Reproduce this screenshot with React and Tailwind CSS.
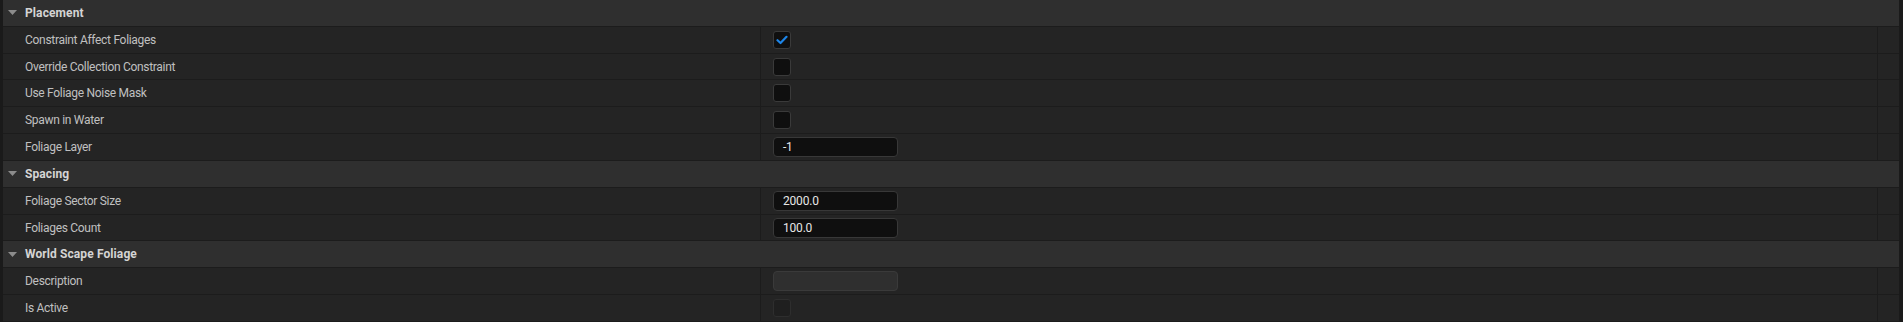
import React from "react";

const Header = ({ title }) => (
  <div className="flex h-[26px] items-center bg-[#2f2f2f] border-b border-[#1c1c1c] box-content">
    <svg width="9" height="5" viewBox="0 0 9 5" className="ml-[5px] mr-[8px]">
      <polygon points="0,0 9,0 4.5,5" fill="#8c8c8c" />
    </svg>
    <span className="font-bold text-[#d4d4d4] tracking-[0.1px]">{title}</span>
  </div>
);

const Check = ({ checked, disabled }) => (
  <div
    className={`w-[18px] h-[18px] rounded-[3px] border flex items-center justify-center ${
      disabled ? "bg-[#1f1f1f] border-[#2e2e2e]" : "bg-[#0f0f0f] border-[#3a3a3a]"
    }`}
  >
    {checked && (
      <svg width="12" height="10" viewBox="0 0 12 10">
        <path d="M1.5 5.2 L4.5 8 L10.5 1.8" stroke="#1d85e8" strokeWidth="2.2" fill="none" strokeLinecap="round" strokeLinejoin="round" />
      </svg>
    )}
  </div>
);

const Input = ({ value, disabled }) => (
  <div
    className={`w-[125px] h-[20px] rounded-[4px] border flex items-center px-[9px] tracking-[-0.2px] ${
      disabled ? "bg-[#2f2f2f] border-[#3a3a3a]" : "bg-[#0f0f0f] border-[#383838] text-[#e6e6e6]"
    }`}
  >
    {value}
  </div>
);

const Row = ({ label, children }) => (
  <div className="flex h-[26px] bg-[#242424] border-b border-[#1c1c1c] box-content">
    <div className="w-[758px] flex items-center pl-[22px] text-[#c0c0c0] tracking-[-0.3px] border-r border-[#1c1c1c]">
      {label}
    </div>
    <div className="flex-1 flex items-center pl-[12px] border-r border-[#1c1c1c]">{children}</div>
    <div className="w-[21px]" />
  </div>
);

export default function App() {
  return (
    <div
      className="w-[1903px] h-[322px] overflow-hidden bg-[#1a1a1a] flex text-[12px]"
      style={{ fontFamily: "Roboto, 'Noto Sans', sans-serif" }}
    >
      <div className="ml-[3px] w-[1896px] flex flex-col">
        <Header title="Placement" />
        <Row label="Constraint Affect Foliages"><Check checked /></Row>
        <Row label="Override Collection Constraint"><Check /></Row>
        <Row label="Use Foliage Noise Mask"><Check /></Row>
        <Row label="Spawn in Water"><Check /></Row>
        <Row label="Foliage Layer"><Input value="-1" /></Row>
        <Header title="Spacing" />
        <Row label="Foliage Sector Size"><Input value="2000.0" /></Row>
        <Row label="Foliages Count"><Input value="100.0" /></Row>
        <Header title="World Scape Foliage" />
        <Row label="Description"><Input disabled /></Row>
        <Row label="Is Active"><Check disabled /></Row>
      </div>
    </div>
  );
}
